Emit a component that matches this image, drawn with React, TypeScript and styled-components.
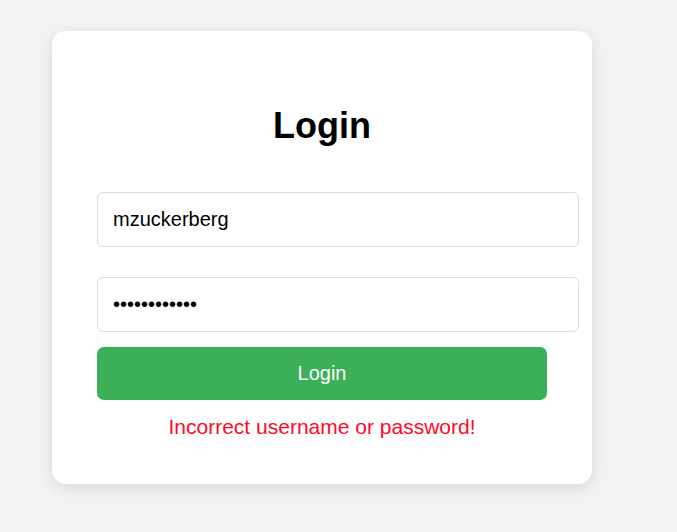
import React from "react";
import styled, { createGlobalStyle } from "styled-components";

const Global = createGlobalStyle`
  html, body {
    margin: 0;
    padding: 0;
    background: #f2f2f2;
    font-family: "Liberation Sans", Arial, sans-serif;
  }
`;

const Page = styled.div`
  padding: 31px 0 0 52px;
  min-height: 532px;
  box-sizing: border-box;
`;

const Card = styled.form`
  width: 540px;
  box-sizing: border-box;
  background: #fff;
  border-radius: 14px;
  box-shadow: 0 4px 14px rgba(0, 0, 0, 0.1);
  padding: 74px 45px 45px;
  display: flex;
  flex-direction: column;
  align-items: flex-start;
`;

const Title = styled.h1`
  align-self: stretch;
  margin: 0 0 46px;
  text-align: center;
  font-size: 36px;
  line-height: 41px;
  font-weight: 700;
  color: #000;
`;

const Field = styled.input<{ $gap: number }>`
  width: 100%;
  box-sizing: content-box;
  padding: 15px;
  margin: 0 0 ${(p) => p.$gap}px;
  border: 1px solid #dcdcdc;
  border-radius: 6px;
  font-family: "Liberation Sans", Arial, sans-serif;
  font-size: 20px;
  line-height: 23px;
  height: 23px;
  color: #000;
  background: #fff;
  outline: none;
`;

const Button = styled.button`
  width: 100%;
  height: 53px;
  border: none;
  border-radius: 7px;
  background: #3caf59;
  color: #fff;
  font-family: "Liberation Sans", Arial, sans-serif;
  font-size: 20px;
  cursor: pointer;
`;

const ErrorText = styled.p`
  align-self: stretch;
  margin: 15px 0 0;
  text-align: center;
  color: #ff0a26;
  font-size: 21px;
  line-height: 24px;
`;

export default function App() {
  return (
    <Page>
      <Global />
      <Card onSubmit={(e) => e.preventDefault()}>
        <Title>Login</Title>
        <Field $gap={30} type="text" defaultValue="mzuckerberg" />
        <Field $gap={15} type="password" defaultValue="123456789012" />
        <Button type="submit">Login</Button>
        <ErrorText>Incorrect username or password!</ErrorText>
      </Card>
    </Page>
  );
}
